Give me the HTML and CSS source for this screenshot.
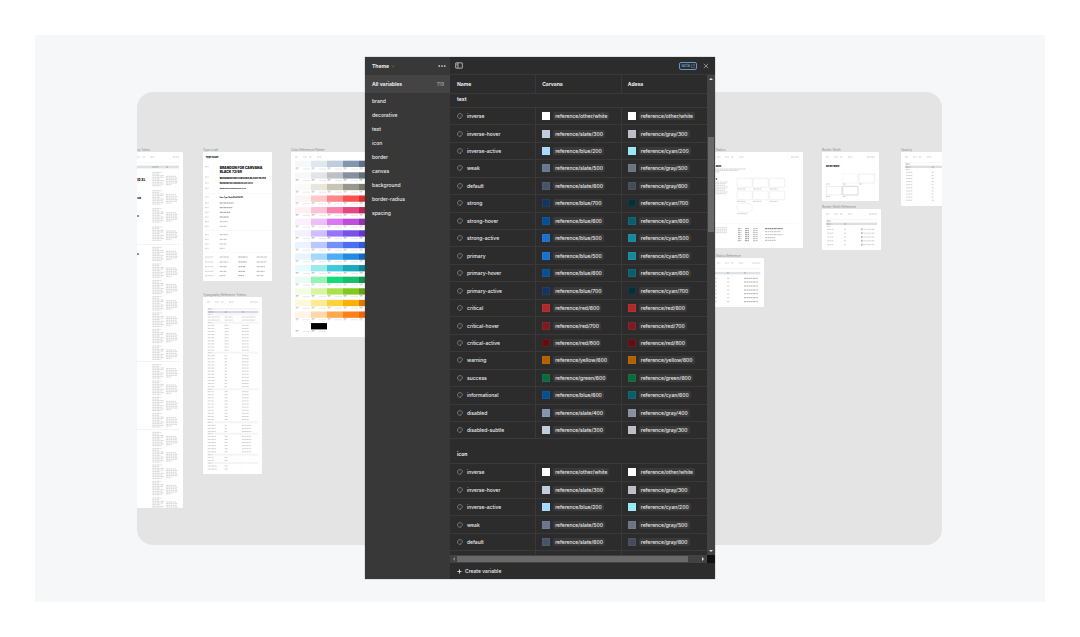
FILE: index.html
```html
<!DOCTYPE html>
<html lang="en">
<head>
  <meta charset="UTF-8">
  <meta name="viewport" content="width=device-width, initial-scale=1.0">
  <title>Theme variables</title>
  <link rel="stylesheet" href="styles.css">
</head>
<body>
  <main class="stage">
    <!-- Artboards are filled in by script.js -->
    <div class="canvas" id="canvas"></div>

    <section class="panel">
      <aside class="sidebar">
        <div class="sidebar-top">
          <button class="collection" type="button">Theme
            <svg class="chevron" viewBox="0 0 8 8"><path d="M1.5 3 4 5.5 6.5 3"/></svg>
          </button>
          <button class="icon-button" type="button" aria-label="More">
            <svg class="dots" viewBox="0 0 16 8"><circle cx="2.5" cy="4" r="1.7"/><circle cx="8" cy="4" r="1.7"/><circle cx="13.5" cy="4" r="1.7"/></svg>
          </button>
        </div>
        <a class="all" href="#all"><span>All variables</span><span class="count">119</span></a>
        <nav class="groups">
          <a href="#brand">brand</a>
          <a href="#decorative">decorative</a>
          <a href="#text">text</a>
          <a href="#icon">icon</a>
          <a href="#border">border</a>
          <a href="#canvas">canvas</a>
          <a href="#background">background</a>
          <a href="#border-radius">border-radius</a>
          <a href="#spacing">spacing</a>
        </nav>
      </aside>

      <div class="main">
        <div class="toolbar">
          <button class="icon-button" type="button" aria-label="Toggle sidebar">
            <svg class="toggle" viewBox="0 0 24 20"><rect x="2" y="2" width="20" height="16" rx="1"/><path d="M9 2v16M4.500 6h2.500M4.500 9h2.500"/></svg>
          </button>
          <a class="beta" href="#beta">Beta
            <svg viewBox="0 0 12 12"><path d="M5 2H1.500v8.500H10V7M7 1.500h3.500V5M10.500 1.500 5.500 6.500"/></svg>
          </a>
          <button class="icon-button" type="button" aria-label="Close">
            <svg class="close" viewBox="0 0 12 12"><path d="M1.500 1.500l9 9M10.500 1.500l-9 9"/></svg>
          </button>
        </div>

        <div class="scroller">
          <div class="viewport">
            <table class="variables">
              <thead>
                <tr><th>Name</th><th>Carvana</th><th>Adesa</th></tr>
              </thead>
              <tbody id="rows"></tbody>
            </table>
          </div>
          <div class="vbar">
            <span class="arrow up"></span>
            <span class="vthumb"></span>
            <span class="arrow down"></span>
          </div>
          <div class="hbar">
            <span class="arrow left"></span>
            <span class="hthumb"></span>
            <span class="arrow right"></span>
          </div>
          <div class="corner"></div>
        </div>

        <button class="create" type="button">
          <svg class="plus" viewBox="0 0 12 12"><path d="M6 1v10M1 6h10"/></svg>
          Create variable
        </button>
      </div>
    </section>
  </main>
  <script src="script.js"></script>
</body>
</html>
```

FILE: styles.css
```css
* {
  box-sizing: border-box;
}

body {
  margin: 0;
  padding: 35px;
  background: #fff;
  color: #ececec;
  font-family: Inter, "Liberation Sans", sans-serif;
  font-size: 5px;
  line-height: 8px;
}

button {
  border: none;
  padding: 0;
  background: none;
  color: inherit;
  font: inherit;
  cursor: pointer;
}

a {
  color: inherit;
  text-decoration: none;
}

svg {
  display: block;
  fill: none;
  stroke: currentColor;
}

/* Canvas and panel share one grid cell, the panel lies on top */
.stage {
  display: grid;
  min-height: calc(100vh - 70px);
  background: #f6f7f9;
}

.canvas {
  grid-area: 1 / 1;
  position: relative;
  margin: 57px 103px 57px 102px;
  border-radius: 16px;
  background: #e4e4e4;
  overflow: hidden;
}

/* Artboards on the free canvas */
.board {
  position: absolute;
  margin: 0;
}

.board figcaption {
  height: 4px;
  color: #8c8c8c;
  font-size: 3px;
  line-height: 4px;
  white-space: nowrap;
}

.board svg {
  border-radius: 1px;
  background: #fff;
  stroke: none;
}

.board text {
  fill: #111;
  font-weight: 900;
}

.b-tokens { left: 0; top: 56px; }
.b-scale { left: 66px; top: 56px; }
.b-reference { left: 66px; top: 201px; }
.b-palette { left: 154px; top: 56px; }
.b-radius { left: 558px; top: 56px; }
.b-radius-ref { left: 558px; top: 162px; }
.b-width { left: 685px; top: 56px; }
.b-width-ref { left: 685px; top: 113px; }
.b-opacity { left: 764px; top: 56px; }

/* These two reach under the panel */
.b-radius figcaption,
.b-radius-ref figcaption {
  padding-left: 21px;
}

/* Variables panel */
.panel {
  grid-area: 1 / 1;
  justify-self: center;
  position: relative;
  display: flex;
  width: 350px;
  margin: 22px 0 23px;
  background: #2c2c2c;
  box-shadow: 0 0 1px rgba(0, 0, 0, 0.5);
}

.sidebar {
  width: 85px;
  background: #383838;
}

.sidebar-top {
  display: flex;
  align-items: center;
  justify-content: space-between;
  height: 18px;
  padding: 0 4px 0 7px;
}

.collection {
  display: flex;
  align-items: center;
  gap: 2px;
  font-weight: 700;
}

.chevron {
  width: 4px;
  height: 4px;
  color: #999;
}

.dots {
  width: 8px;
  height: 4px;
  fill: #e6e6e6;
  stroke: none;
}

.all {
  display: flex;
  align-items: center;
  justify-content: space-between;
  height: 18px;
  padding: 0 6px 0 7px;
  background: #444;
  font-weight: 700;
}

.count {
  color: #b3b3b3;
  font-weight: 400;
}

.groups {
  display: flex;
  flex-direction: column;
  gap: 6px;
  padding: 4px 7px;
  font-weight: 500;
}

.main {
  flex: 1;
  display: flex;
  flex-direction: column;
}

.toolbar {
  display: flex;
  align-items: center;
  gap: 6px;
  height: 18px;
  padding: 0 6px 0 5px;
  border-bottom: 1px solid #383838;
}

.toggle {
  width: 8px;
  height: 7px;
  stroke-width: 2;
}

.beta {
  display: flex;
  align-items: center;
  gap: 1px;
  height: 8px;
  margin-left: auto;
  padding: 0 1px;
  border: 1px solid #5a9cc4;
  border-radius: 2px;
  color: #78b9e0;
  font-size: 4px;
  line-height: 6px;
}

.beta svg {
  width: 4px;
  height: 4px;
}

.close {
  width: 6px;
  height: 6px;
}

.scroller {
  flex: 1;
  display: grid;
  grid-template: minmax(0, 1fr) 8px / minmax(0, 1fr) 8px;
}

.viewport {
  display: grid;
  overflow: hidden;
}

.variables {
  width: 100%;
  height: 100%;
  border-collapse: collapse;
  table-layout: fixed;
  text-align: left;
}

.variables th,
.variables td {
  padding: 0 7px;
  border-bottom: 1px solid #393939;
}

.variables th + th,
.variables td + td {
  padding: 0 6px;
  border-left: 1px solid #393939;
}

.variables thead th {
  height: 18px;
}

.variables td {
  height: 17px;
  font-weight: 500;
}

.variables .group th {
  height: 14px;
  padding-bottom: 2px;
}

.variables .group.spaced th {
  height: 24px;
  padding-top: 8px;
}

.variables .rest td {
  height: 4px;
  border-bottom: none;
}

.name,
.value {
  display: flex;
  align-items: center;
  gap: 4px;
}

.value {
  gap: 3px;
}

.palette {
  width: 6px;
  height: 6px;
  color: #b0b0b0;
}

.swatch {
  width: 8px;
  height: 8px;
  border: 1px solid rgba(255, 255, 255, 0.05);
}

.chip {
  padding: 0 2px;
  border-radius: 2px;
  background: #3a3a3a;
}

/* Scrollbars */
.vbar {
  display: flex;
  flex-direction: column;
  align-items: center;
  padding: 3px 0;
  background: #424242;
}

.vthumb {
  width: 6px;
  height: 20%;
  margin: 57px 0 auto;
  background: #696969;
}

.hbar {
  display: flex;
  align-items: center;
  gap: 2px;
  padding: 0 3px;
  background: #424242;
}

.hthumb {
  width: 92%;
  height: 6px;
  margin-right: auto;
  background: #696969;
}

.corner {
  background: #111;
}

.arrow {
  border: 2px solid transparent;
}

.up {
  border-top: none;
  border-bottom-color: #ddd;
}

.down {
  border-bottom: none;
  border-top-color: #ddd;
}

.left {
  border-left: none;
  border-right-color: #888;
}

.right {
  border-right: none;
  border-left-color: #ddd;
}

.create {
  display: flex;
  align-items: center;
  gap: 3px;
  height: 16px;
  padding: 0 7px;
  font-weight: 500;
}

.plus {
  width: 5px;
  height: 5px;
  stroke-width: 2;
}
```

FILE: script.js
```js
const colors = {
  'other/white': '#ffffff',
  'slate/300': '#c0ccdc', 'slate/400': '#8595b0', 'slate/500': '#68768f', 'slate/600': '#475468',
  'gray/300': '#bdbfc3', 'gray/400': '#88909b', 'gray/500': '#6c7480', 'gray/600': '#434c57',
  'blue/200': '#a5d8ff', 'blue/500': '#1971d0', 'blue/600': '#054f93', 'blue/700': '#12365f',
  'cyan/200': '#99e9f2', 'cyan/500': '#128a9c', 'cyan/600': '#0b5f6c', 'cyan/700': '#082f38',
  'red/600': '#b02828', 'red/700': '#7c1b1e', 'red/800': '#5c1012',
  'yellow/600': '#b46000', 'green/600': '#0b6b3c'
};

const base = [
  ['inverse', 'other/white', 'other/white'],
  ['inverse-hover', 'slate/300', 'gray/300'],
  ['inverse-active', 'blue/200', 'cyan/200'],
  ['weak', 'slate/500', 'gray/500'],
  ['default', 'slate/600', 'gray/600']
];

const textRows = base.concat([
  ['strong', 'blue/700', 'cyan/700'],
  ['strong-hover', 'blue/600', 'cyan/600'],
  ['strong-active', 'blue/500', 'cyan/500'],
  ['primary', 'blue/500', 'cyan/500'],
  ['primary-hover', 'blue/600', 'cyan/600'],
  ['primary-active', 'blue/700', 'cyan/700'],
  ['critical', 'red/600', 'red/600'],
  ['critical-hover', 'red/700', 'red/700'],
  ['critical-active', 'red/800', 'red/800'],
  ['warning', 'yellow/600', 'yellow/600'],
  ['success', 'green/600', 'green/600'],
  ['informational', 'blue/600', 'cyan/600'],
  ['disabled', 'slate/400', 'gray/400'],
  ['disabled-subtle', 'slate/300', 'gray/300']
]);

const paletteIcon = '<svg class="palette" viewBox="0 0 12 12"><path d="M7 11C3.500 11.500 1 9 1 6s2.300-5 5-5 5 2 5 4.500C11 7.500 9.500 8 8 8 6.500 8 7.500 10 7 11z"/><path d="M4 5v.5M6 3.500v.5M8.200 5v.5"/></svg>';

function value(token) {
  return `<td><div class="value"><span class="swatch" style="background:${colors[token]}"></span><span class="chip">reference/${token}</span></div></td>`;
}

function row([name, carvana, adesa]) {
  return `<tr><td><div class="name">${paletteIcon}${name}</div></td>${value(carvana)}${value(adesa)}</tr>`;
}

document.getElementById('rows').innerHTML =
  '<tr class="group"><th colspan="3">text</th></tr>' + textRows.map(row).join('') +
  '<tr class="group spaced"><th colspan="3">icon</th></tr>' + base.map(row).join('') +
  '<tr class="rest"><td></td><td></td><td></td></tr>';

// Artboard drawings, three units to the pixel

function rect(x, y, w, h, fill) {
  return `<rect x="${x}" y="${y}" width="${w}" height="${h}" fill="${fill}"/>`;
}

// One line of unreadable small print
function line(x, y, w, color = '#d2d2d2') {
  return `<path d="M${x} ${y}h${w}" stroke="${color}" stroke-width="3" stroke-dasharray="7 1 4 1"/>`;
}

function box(x, y, w, h, color, rx = 0) {
  return `<rect x="${x}" y="${y}" width="${w}" height="${h}" rx="${rx}" fill="none" stroke="${color}" stroke-width="2"/>`;
}

function head(x, right) {
  return line(x, 15, 10) + line(x + 24, 15, 12, '#e0d2d2') + line(x + 42, 15, 8) +
    line(x + 66, 15, 14) + line(right - 24, 15, 24);
}

function board(name, label, w, h, art) {
  return `<figure class="board b-${name}"><figcaption>${label}</figcaption>` +
    `<svg width="${w}" height="${h}" viewBox="0 0 ${w * 3} ${h * 3}">${art}</svg></figure>`;
}

function tokens() {
  let art = line(0, 15, 10) + line(17, 15, 8) + line(39, 15, 14) + line(107, 15, 18) +
    rect(0, 31, 125, 1, '#eee') + rect(0, 41, 125, 8, '#dcdfe3') +
    line(46, 45, 18, '#a5abb1') + line(87, 45, 6, '#a5abb1') +
    '<text x="1" y="87" font-size="9">ID.XL</text>' +
    '<text x="1" y="141" font-size="8">UR</text>' +
    '<text x="1" y="195" font-size="7">o</text>' +
    '<text x="1" y="309" font-size="7">o</text>';
  const starts = [59, 114, 168, 223, 284, 334, 383, 432, 481, 530, 580, 636, 685, 734, 783, 839, 888, 937, 986, 1036];
  const widths = [28, 20, 35, 34, 24, 36, 30, 35, 27];
  starts.forEach((y) => {
    widths.forEach((w, i) => {
      art += line(46, y + 2 + i * 5, w, '#d6d6d6');
    });
    [30, 35, 32, 36, 34, 16].forEach((w, i) => {
      art += line(87, y + 14 + i * 5, w, '#d6d6d6');
    });
  });
  art += rect(0, 277, 125, 2, '#eee') + rect(0, 628, 125, 2, '#eee') + rect(0, 831, 125, 2, '#eee');
  return art;
}

function scale() {
  let art = '<text x="8" y="17" font-size="7">Type Scale</text>' +
    '<text x="50" y="52" font-size="10">BRANDON FOR CARVANA</text>' +
    '<text x="50" y="62" font-size="10">BLACK 72/68</text>' +
    '<text x="50" y="80" font-size="7">BRANDON FOR CARVANA BLACK 56/50</text>' +
    '<text x="50" y="96" font-size="5">BRANDON FOR CARVANA BLACK 40/40</text>' +
    '<text x="50" y="112" font-size="4">BRANDON FOR CARVANA BLACK 32/32</text>' +
    '<text x="50" y="138" font-size="5">Inter Type Scale Bold 32/40</text>' +
    rect(6, 123, 198, 1, '#eee') + rect(6, 235, 198, 1, '#eee') + rect(6, 302, 198, 1, '#eee');
  [44, 75, 93, 109, 135, 153, 167, 181, 195, 209, 223, 248, 262, 276, 289].forEach((y) => {
    art += line(6, y, 11);
  });
  [[153, 42], [167, 38], [181, 32], [195, 28], [209, 25], [223, 22], [248, 25], [262, 22], [276, 20], [289, 15]].forEach(([y, w]) => {
    art += line(50, y, w, y < 200 ? '#9c9c9c' : '#c2c2c2');
  });
  [[315, 28], [330, 26], [344, 22], [358, 21], [371, 17]].forEach(([y, w]) => {
    art += line(6, y, 26) + line(50, y, w, '#bbb') + line(106, y, w, '#aaa') + line(161, y, w + 3, '#bbb');
  });
  return art;
}

function reference() {
  let art = head(12, 165) + rect(14, 34, 152, 4, '#f1f1f1') + rect(14, 42, 152, 6, '#d3d9df') +
    line(14, 36, 12, '#bbb') + line(16, 45, 16, '#a5abb1') + line(65, 45, 7, '#a5abb1') + line(117, 45, 6, '#a5abb1');
  [52, 77, 167, 277, 376, 410, 473, 498].forEach((y) => {
    art += rect(14, y - 3, 152, 6, '#f5f5f5') + line(14, y, 14);
  });
  const blocks = [[60, 2, 36, 24, 40], [85, 9, 20, 12, 21], [176, 11, 20, 8, 21], [284, 10, 18, 10, 20], [385, 3, 24, 6, 28], [418, 6, 26, 10, 28], [481, 2, 18, 10, 0], [507, 2, 28, 10, 0]];
  blocks.forEach(([top, count, a, b, c]) => {
    for (let i = 0; i < count; i++) {
      const y = top + i * 9.3;
      art += line(14, y, a) + line(65, y, b) + (c ? line(117, y, c) : '');
    }
  });
  return art + rect(63, 52, 1, 466, '#f2f2f2') + rect(115, 52, 1, 466, '#f2f2f2');
}

function palette() {
  const ramps = [
    ['#f5f9fd', '#e0e7ef', '#bfccdc', '#8296b0', '#607086'],
    ['#f7f8f9', '#e3e5e8', '#bcc1c7', '#87919b', '#66717c'],
    ['#fafaf6', '#e8e7dd', '#c8c5b5', '#99978a', '#7b796e'],
    ['#fff4f3', '#ffc9c9', '#ff8686', '#fa5050', '#dc3030'],
    ['#fff0f5', '#fcc2d7', '#f783ac', '#e34880', '#bd2458'],
    ['#faf0fc', '#eebefa', '#da77f2', '#be4bdb', '#9632b0'],
    ['#f3f0ff', '#d0bfff', '#9775fa', '#7950e8', '#6238cc'],
    ['#edf2ff', '#bac8ff', '#748ffc', '#4c6ef0', '#3858d5'],
    ['#e7f5ff', '#a5d8ff', '#4facf5', '#228be0', '#126abd'],
    ['#e5fcfc', '#99e9ef', '#3bc9db', '#15a9bc', '#10869a'],
    ['#e9fdf3', '#94f3b6', '#18d978', '#16bf6b', '#12914f'],
    ['#f4fce3', '#d8f5a2', '#a9e34b', '#82c91e', '#66a015'],
    ['#fff9db', '#ffe993', '#ffd23b', '#fab005', '#df7800'],
    ['#fff4e6', '#ffd8a8', '#ffa94d', '#fd8118', '#ed6808'],
    ['#ffffff', '#000000']
  ];
  let art = head(12, 255);
  ramps.forEach((ramp, r) => {
    const y = 26 + r * 34.8;
    ramp.forEach((color, c) => {
      const x = 12 + c * 48;
      art += rect(x, y, 48, 19, color) + line(x + 2, y + 22, 10, '#c4c4c4') +
        line(x + 2, y + 25, 9, '#ddd') + line(x + 24, y + 25, 20, '#e4e4e4');
    });
  });
  return art;
}

function radius() {
  let art = head(66, 312) + '<text x="62" y="44" font-size="6">adius</text>' +
    line(40, 51, 112) + line(40, 55, 90) + line(40, 60, 34) +
    '<text x="62" y="85" font-size="6">s</text>';
  for (let i = 0; i < 8; i++) art += line(40, 90 + i * 5, 58 - (i % 3) * 4, '#dadada');
  [126, 174, 223].forEach((x) => {
    art += box(x, 79, 46, 27, '#ececec', 1) + line(x, 111, 26) +
      box(x, 117, 46, 26, '#ececec', 2) + line(x, 148, 26);
  });
  art += box(126, 154, 46, 27, '#ececec', 13) + line(126, 185, 30);
  art += rect(40, 214, 270, 1, '#f2f2f2');
  for (let i = 0; i < 4; i++) art += line(40, 227 + i * 5, 56, '#dadada');
  for (let i = 0; i < 7; i++) {
    art += line(129, 230 + i * 6, 10, '#aaa') + line(150, 230 + i * 6, 13, '#999') + line(174, 230 + i * 6, 15, '#bbb');
  }
  return art + line(210, 230, 54, '#777') + line(210, 239, 46, '#c4c4c4') + line(210, 248, 54, '#c4c4c4') +
    line(210, 257, 30, '#bbb') + line(210, 265, 32, '#bbb');
}

function radiusRef() {
  let art = head(66, 196) + rect(0, 31, 196, 1, '#ddd') + rect(0, 42, 196, 7, '#dfe1e8') +
    line(96, 45, 6, '#aaa') + line(147, 45, 6, '#aaa');
  [61, 72, 84, 96, 107, 119, 131].forEach((y) => {
    art += line(50, y, 16) + line(96, y, 8) + line(147, y, 42, '#b0b0b0');
  });
  return art;
}

function width() {
  return head(12, 158) + '<text x="12" y="45" font-size="6">Border Width</text>' +
    box(62, 66, 46, 27, '#f3f3f3') + box(111, 66, 46, 27, '#e8e8e8') +
    box(13, 103, 46, 26, '#e8e8e8') + box(62, 103, 46, 26, '#c4c6c9', 1) +
    line(12, 96, 12) + line(62, 96, 10) + line(111, 96, 10) + line(12, 133, 12) + line(62, 133, 10);
}

function refTable(right, rows, step, second, third) {
  let art = head(12, right) + rect(12, 31, right - 12, 1, '#e6e6e6') + rect(12, 41, right - 12, 7, '#dcdee3') +
    line(14, 36, 12, '#aaa') + line(14, 45, 14, '#aaa') + line(second, 45, 7, '#aaa') + line(14, 52, 12);
  for (let i = 0; i < rows; i++) {
    const y = 61 + i * step;
    art += line(16, y, 18) + line(second, y, 6);
    if (third) art += rect(third, y - 3, 5, 6, '#bbb') + line(third + 7, y, 34);
  }
  return art;
}

document.getElementById('canvas').innerHTML =
  board('tokens', 'ity Token', 46, 356, tokens()) +
  board('scale', 'Type scale', 69, 129, scale()) +
  board('reference', 'Typography Reference Tokens', 59, 177, reference()) +
  board('palette', 'Color Reference Palette', 90, 185, palette()) +
  board('radius', 'Radius', 108, 96, radius()) +
  board('radius-ref', 'Radius Reference', 69, 49, radiusRef()) +
  board('width', 'Border Width', 57, 49, width()) +
  board('width-ref', 'Border Width Reference', 59, 41, refTable(165, 5, 11.5, 66, 117)) +
  board('opacity', 'Opacity', 60, 54, refTable(170, 10, 9.3, 92));
```
